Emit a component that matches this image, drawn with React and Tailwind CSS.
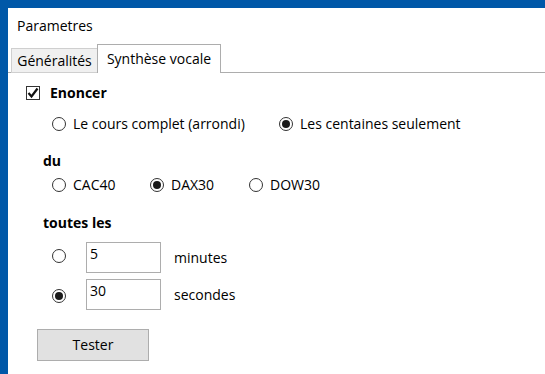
const FONT = { fontFamily: '"Open Sans", "Noto Sans", sans-serif' };

function Radio({ checked }) {
  return (
    <span className="inline-flex h-[14px] w-[14px] shrink-0 items-center justify-center rounded-full border border-[#333] bg-white">
      {checked && <span className="h-[8px] w-[8px] rounded-full bg-[#1a1a1a]" />}
    </span>
  );
}

function Option({ checked, label, className = '' }) {
  return (
    <div className={`flex h-[18px] items-center gap-[7px] ${className}`}>
      <Radio checked={checked} />
      <span>{label}</span>
    </div>
  );
}

function NumberBox({ value }) {
  return (
    <div className="h-[31px] w-[75px] border border-[#adadad] bg-white px-[3px] pt-[2px] leading-[18px]">
      {value}
    </div>
  );
}

export default function App() {
  return (
    <div
      className="h-[374px] w-[545px] overflow-hidden bg-[#0058a8] pl-[8px] pt-[8px] text-[14px] leading-[18px] text-black"
      style={FONT}
    >
      <div className="h-full w-full bg-white">
        {/* Title */}
        <div className="px-[9px] pt-[9px]">Parametres</div>

        {/* Tabs */}
        <div className="mt-[9px] flex items-end border-b border-[#adadad] pl-[3px]">
          <div className="-mb-px flex h-[25px] w-[86px] items-center justify-center border border-r-0 border-[#cfcfcf] bg-[#f0f0f0]">
            Généralités
          </div>
          <div className="-mb-px flex h-[29px] w-[124px] items-center justify-center border border-b-0 border-[#adadad] bg-white">
            Synthèse vocale
          </div>
        </div>

        {/* Body */}
        <div className="pl-[18px] pt-[11px]">
          <div className="flex h-[18px] items-center gap-[10px]">
            <span className="flex h-[14px] w-[14px] items-center justify-center border border-[#333] bg-white">
              <svg width="12" height="12" viewBox="0 0 12 12">
                <path d="M1.5 6 L4.5 9.5 L10.5 1.5" fill="none" stroke="#111" strokeWidth="2.2" />
              </svg>
            </span>
            <span className="font-bold">Enoncer</span>
          </div>

          <div className="mt-[13px] flex pl-[26px]">
            <Option label="Le cours complet (arrondi)" className="w-[227px]" />
            <Option checked label="Les centaines seulement" />
          </div>

          <div className="mt-[19px] pl-[17px] font-bold">du</div>
          <div className="mt-[6px] flex pl-[26px]">
            <Option label="CAC40" className="w-[98px]" />
            <Option checked label="DAX30" className="w-[99px]" />
            <Option label="DOW30" />
          </div>

          <div className="mt-[20px] pl-[17px] font-bold">toutes les</div>
          <div className="mt-[10px] flex flex-col gap-[6px] pl-[26px]">
            <div className="flex items-center">
              <span className="w-[34px]"><Radio /></span>
              <NumberBox value="5" />
              <span className="ml-[13px]">minutes</span>
            </div>
            <div className="flex items-center">
              <span className="w-[34px]"><Radio checked /></span>
              <NumberBox value="30" />
              <span className="ml-[13px]">secondes</span>
            </div>
          </div>

          <button className="ml-[11px] mt-[19px] h-[32px] w-[112px] border border-[#adadad] bg-[#e1e1e1]">
            Tester
          </button>
        </div>
      </div>
    </div>
  );
}
